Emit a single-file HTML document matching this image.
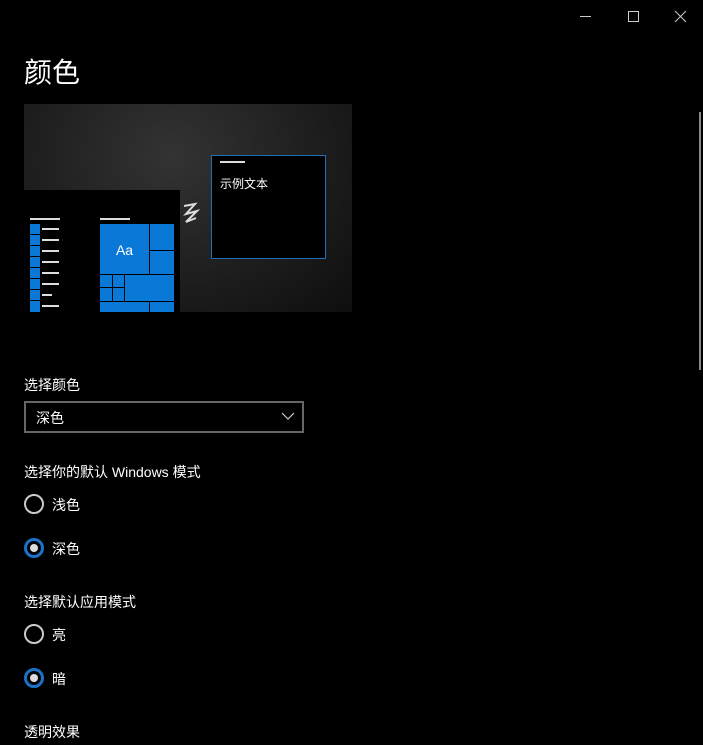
<!DOCTYPE html>
<html><head><meta charset="utf-8"><style>
*{margin:0;padding:0;box-sizing:border-box}
body{width:703px;height:745px;background:#000;color:#fff;font-family:"Liberation Sans","Noto Sans CJK SC",sans-serif;position:relative;overflow:hidden}
.a{position:absolute}
.b{position:absolute;background:#0a78d7}
.w{position:absolute;background:#ddd;height:2px}
.lbl{position:absolute;font-size:14px;color:#fff;left:24px}
.r{position:absolute;left:24px;width:20px;height:20px;border-radius:50%}
.rt{position:absolute;left:52px;font-size:14px}
</style></head><body>
<svg class="a" style="left:578px;top:9px" width="112" height="16">
<line x1="2" y1="7.5" x2="13" y2="7.5" stroke="#ccc"/>
<rect x="50.5" y="2.5" width="10" height="10" fill="none" stroke="#ccc"/>
<path d="M97 2L108 13M108 2L97 13" stroke="#ccc"/>
</svg>
<div class="a" style="left:699px;top:112px;width:2px;height:258px;background:#888"></div>
<div class="a" style="left:24px;top:53px;font-size:28px;line-height:40px">颜色</div>
<div class="a" style="left:24px;top:104px;width:328px;height:208px;background:radial-gradient(ellipse at 45% 25%,#333 0%,#222 45%,#0e0e0e 100%)"></div>
<div class="a" style="left:24px;top:190px;width:156px;height:122px;background:#000"></div>
<div class="w" style="left:30px;top:218px;width:30px"></div>
<div class="w" style="left:100px;top:218px;width:30px"></div>
<div class="b" style="left:30px;top:224px;width:10px;height:88px"></div>
<div class="a" style="left:30px;top:234px;width:10px;height:1px;background:#000;box-shadow:0 11px #000,0 22px #000,0 33px #000,0 44px #000,0 55px #000,0 66px #000"></div>
<div class="w" style="left:42px;top:228px;width:17px;box-shadow:0 11px #ddd,0 22px #ddd,0 33px #ddd,0 44px #ddd,0 55px #ddd,0 77px #ddd"></div>
<div class="w" style="left:42px;top:294px;width:10px"></div>
<div class="b" style="left:100px;top:224px;width:49px;height:50px;font-size:14px;text-align:center;line-height:52px;color:#fff">Aa</div>
<div class="b" style="left:150px;top:224px;width:24px;height:26px"></div>
<div class="b" style="left:150px;top:251px;width:24px;height:23px"></div>
<div class="b" style="left:100px;top:275px;width:12px;height:12px"></div>
<div class="b" style="left:113px;top:275px;width:11px;height:12px"></div>
<div class="b" style="left:100px;top:288px;width:12px;height:13px"></div>
<div class="b" style="left:113px;top:288px;width:11px;height:13px"></div>
<div class="b" style="left:125px;top:275px;width:49px;height:26px"></div>
<div class="b" style="left:100px;top:302px;width:49px;height:10px"></div>
<div class="b" style="left:150px;top:302px;width:24px;height:10px"></div>
<svg class="a" style="left:180px;top:200px" width="22" height="26"><path d="M4 6L15 4L6 14L17 11L6 22L16 18" fill="none" stroke="#ddd" stroke-width="2"/></svg>
<div class="a" style="left:211px;top:155px;width:115px;height:104px;background:#000;border:1px solid #1f6fb8"></div>
<div class="w" style="left:220px;top:161px;width:25px"></div>
<div class="a" style="left:220px;top:175px;font-size:12px">示例文本</div>
<div class="lbl" style="top:375px">选择颜色</div>
<div class="a" style="left:24px;top:401px;width:280px;height:32px;border:2px solid #666"></div>
<div class="a" style="left:36px;top:408px;font-size:14px">深色</div>
<svg class="a" style="left:281px;top:411px" width="14" height="10"><path d="M1 2L7 8L13 2" fill="none" stroke="#ccc" stroke-width="1.2"/></svg>
<div class="lbl" style="top:462px">选择你的默认 Windows 模式</div>
<div class="r" style="top:494px;border:2px solid #ccc"></div><div class="rt" style="top:495px">浅色</div>
<div class="r" style="top:538px;border:3px solid #1a73c8;background:#000"><div class="a" style="left:3px;top:3px;width:8px;height:8px;border-radius:50%;background:#ddd"></div></div><div class="rt" style="top:539px">深色</div>
<div class="lbl" style="top:592px">选择默认应用模式</div>
<div class="r" style="top:624px;border:2px solid #ccc"></div><div class="rt" style="top:625px">亮</div>
<div class="r" style="top:668px;border:3px solid #1a73c8;background:#000"><div class="a" style="left:3px;top:3px;width:8px;height:8px;border-radius:50%;background:#ddd"></div></div><div class="rt" style="top:669px">暗</div>
<div class="lbl" style="top:722px">透明效果</div>
</body></html>
